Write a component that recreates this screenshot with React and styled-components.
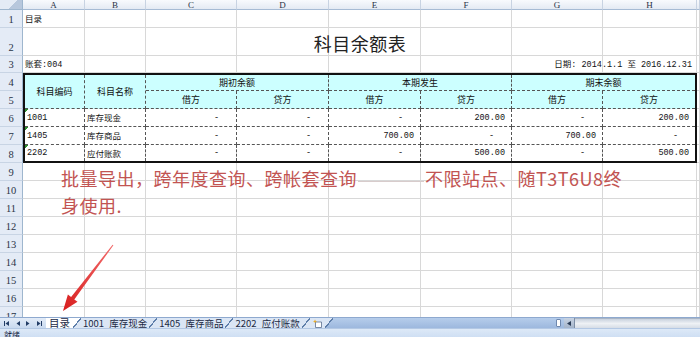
import { Fragment } from "react";
import styled, { createGlobalStyle } from "styled-components";

const GlobalStyle = createGlobalStyle`
  *, *::before, *::after { box-sizing: border-box; }
  html, body { margin: 0; padding: 0; background: #fff; }
  body { font-family: "Noto Sans CJK SC", sans-serif; color: #111; }
`;

const COLUMNS = ["A", "B", "C", "D", "E", "F", "G", "H"];
const ROWS = Array.from({ length: 17 }, (_, i) => i + 1);
const CELL_FONT = `"Liberation Mono", "Noto Sans CJK SC", monospace`;
const TAB_BG = "#dbe6f5";

const accounts = [
  { code: "1001", name: "库存现金", values: ["-", "-", "-", "200.00", "-", "200.00"] },
  { code: "1405", name: "库存商品", values: ["-", "-", "700.00", "-", "700.00", "-"] },
  { code: "2202", name: "应付账款", values: ["-", "-", "-", "500.00", "-", "500.00"] },
];

const groups = ["期初余额", "本期发生", "期末余额"];
const tabs = [
  { code: "", name: "目录", active: true },
  { code: "1001", name: "库存现金" },
  { code: "1405", name: "库存商品" },
  { code: "2202", name: "应付账款" },
];

const Page = styled.div`
  position: relative;
  width: 700px;
  height: 337px;
  display: flex;
  flex-direction: column;
  overflow: hidden;
`;

const Sheet = styled.div`
  display: grid;
  grid-template-columns: 23px 62px 61px 91px 92px 92px 91px 91px 94px 1fr;
  grid-template-rows: 10px 18px 28px 17px repeat(14, 18px);
  height: 317px;
  overflow: hidden;
`;

const Corner = styled.div`
  grid-row: 1;
  grid-column: 1;
  background: linear-gradient(135deg, transparent 58%, #b7c7dc 58%), #e4ebf5;
  border-right: 1px solid #9eb6ce;
  border-bottom: 1px solid #9eb6ce;
`;

const ColHead = styled.div`
  grid-row: 1;
  grid-column: ${(p) => p.$col};
  display: flex;
  align-items: center;
  justify-content: center;
  background: linear-gradient(#f8fafd, #e4eaf3);
  border-right: 1px solid #c8d3e2;
  border-bottom: 1px solid #a6bbd4;
  font-family: "Liberation Serif", serif;
  font-size: 9px;
  line-height: 10px;
  color: #2a3346;
`;

const RowHead = styled.div`
  grid-row: ${(p) => p.$row};
  grid-column: 1;
  display: flex;
  align-items: flex-end;
  justify-content: center;
  padding-bottom: 1px;
  background: #e4ebf6;
  border-right: 1px solid #9eb6ce;
  border-bottom: 1px solid #c8d4e4;
  font-family: "Liberation Serif", serif;
  font-size: 10.5px;
  line-height: 12px;
  color: #2a3346;
`;

const GridCell = styled.div`
  grid-row: ${(p) => p.$row};
  grid-column: ${(p) => p.$col};
  border-right: 1px solid #d8d8d8;
  border-bottom: 1px solid #d8d8d8;
`;

const CellText = styled.div`
  grid-area: ${(p) => p.$area};
  display: flex;
  align-items: flex-end;
  justify-content: ${(p) => p.$justify || "flex-start"};
  padding: 0 ${(p) => p.$padRight || 0}px 3px 2px;
  font-family: ${CELL_FONT};
  font-size: 8.5px;
  line-height: 10px;
  white-space: nowrap;
  color: #111;
`;

const Title = styled.div`
  grid-area: 3 / 2 / 4 / 10;
  display: flex;
  align-items: center;
  justify-content: center;
  padding-top: 2px;
  font-size: 18px;
  letter-spacing: 0.5px;
  color: #222;
`;

const Table = styled.div`
  grid-area: 5 / 2 / 10 / 10;
  display: grid;
  grid-template-columns: 60px 61px 91px 92px 92px 91px 91px 92px;
  grid-template-rows: 16px 18px 18px 18px 16px;
  border: 2px solid #111;
  background: #fff;
  z-index: 1;
`;

const TCell = styled.div`
  grid-column: span ${(p) => p.$span || 1};
  grid-row: span ${(p) => p.$rows || 1};
  display: flex;
  align-items: center;
  justify-content: ${(p) => p.$justify || "center"};
  padding: 0 ${(p) => p.$padRight || 0}px 0 ${(p) => p.$padLeft || 0}px;
  background: ${(p) =>
    p.$head
      ? "#ccffff"
      : p.$flag
      ? "linear-gradient(135deg, #2f8f2f 0 2.6px, #fff 2.6px)"
      : "#fff"};
  border-right: ${(p) => (p.$lastCol ? "none" : "1px dashed #555")};
  border-bottom: ${(p) => (p.$lastRow ? "none" : "1px dashed #555")};
  font-family: ${CELL_FONT};
  font-size: ${(p) => (p.$head ? 9 : 8.5)}px;
  white-space: nowrap;
  color: #111;
`;

const Note = styled.div`
  grid-area: 10 / 2 / 14 / 10;
  padding: 2px 0 0 38px;
  font-family: "Noto Sans CJK SC", sans-serif;
  font-size: 18px;
  line-height: 27px;
  letter-spacing: 0.5px;
  color: #c25452;
  white-space: nowrap;
  z-index: 1;
`;

const Dash = styled.span`
  display: inline-block;
  width: 66px;
  height: 1px;
  margin: 0 1px;
  vertical-align: middle;
  background: #d8cccc;
`;

const Arrow = styled.svg`
  position: absolute;
  left: 55px;
  top: 240px;
  width: 65px;
  height: 75px;
  pointer-events: none;
  z-index: 2;
`;

const TabBar = styled.div`
  display: flex;
  height: 11px;
  background: linear-gradient(#b6cdeb, #9db8de);
  border-top: 1px solid #8ea9cf;
`;

const Nav = styled.div`
  width: 46px;
  display: flex;
  align-items: center;
  justify-content: space-around;
  padding: 0 2px;
  background: linear-gradient(#e3ecf8, #c8d9ef);
`;

const Tab = styled.div`
  display: flex;
  align-items: center;
  height: 100%;
  padding: 0 ${(p) => (p.$active ? 3 : 2)}px;
  background: ${(p) => (p.$active ? "#fff" : TAB_BG)};
  font-size: ${(p) => (p.$active ? 10.5 : 9.5)}px;
  line-height: 10px;
  word-spacing: 3px;
  color: #1b2a44;
  white-space: nowrap;
`;

const Slash = styled.div`
  width: 8px;
  height: 100%;
  background: linear-gradient(
    to bottom right,
    ${(p) => p.$left} calc(50% - 0.7px),
    #5f7faa calc(50% - 0.7px),
    #5f7faa calc(50% + 0.7px),
    ${(p) => p.$right} calc(50% + 0.7px)
  );
`;

const Filler = styled.div`
  flex: 1;
`;

const Splitter = styled.div`
  width: 5px;
  margin: 1px 3px 1px 0;
  background: #fff;
  border: 1px solid #6f88ae;
  border-radius: 1px;
`;

const ScrollButton = styled.div`
  width: 11px;
  display: flex;
  align-items: center;
  justify-content: center;
  background: linear-gradient(#c7d3e3, #a4b4ca);
  border-right: 1px solid #7e8fa6;
`;

const ScrollTrack = styled.div`
  width: 125px;
  background: linear-gradient(#8797ad 0, #c9d2de 1px, #eef1f5 55%, #d6dde6 100%);
`;

const StatusBar = styled.div`
  height: 9px;
  padding: 1px 0 0 4px;
  overflow: hidden;
  background: linear-gradient(#dde9f7, #cfdff3);
  border-top: 1px solid #b3c8e4;
  font-size: 8px;
  line-height: 10px;
  color: #1b2a44;
`;

const NavIcon = ({ dir, edge }) => (
  <svg width="6" height="5" viewBox="0 0 6 5">
    {dir === "left" ? (
      <>
        {edge && <rect x="0" y="0" width="1" height="5" fill="#223c66" />}
        <polygon points="5,0 5,5 1.5,2.5" fill="#223c66" />
      </>
    ) : (
      <>
        <polygon points="1,0 1,5 4.5,2.5" fill="#223c66" />
        {edge && <rect x="5" y="0" width="1" height="5" fill="#223c66" />}
      </>
    )}
  </svg>
);

const InsertIcon = () => (
  <svg width="11" height="9" viewBox="0 0 11 9">
    <path d="M3.5 3h6v5.5h-6z" fill="#fff" stroke="#5a6f8f" strokeWidth="0.8" />
    <path d="M3 0.5l.7 1.5 1.6.3-1.6.4L3 4.3l-.7-1.6L.7 2.3l1.6-.3z" fill="#eda918" />
  </svg>
);

export default function App() {
  return (
    <>
      <GlobalStyle />
      <Page>
        <Sheet>
          <Corner />
          {COLUMNS.map((c, i) => (
            <ColHead key={c} $col={i + 2}>
              {c}
            </ColHead>
          ))}
          <ColHead $col={10} />
          {ROWS.map((r) => (
            <RowHead key={`h${r}`} $row={r + 1}>
              {r}
            </RowHead>
          ))}
          {ROWS.map((r) =>
            COLUMNS.concat("I").map((c, i) => (
              <GridCell key={`${c}${r}`} $row={r + 1} $col={i + 2} />
            ))
          )}

          <CellText $area="2 / 2 / 3 / 4">目录</CellText>
          <Title>科目余额表</Title>
          <CellText $area="4 / 2 / 5 / 4">账套:004</CellText>
          <CellText $area="4 / 7 / 5 / 10" $justify="flex-end" $padRight={5}>
            日期: 2014.1.1 至 2016.12.31
          </CellText>

          <Table>
            <TCell $head $rows={2}>科目编码</TCell>
            <TCell $head $rows={2}>科目名称</TCell>
            {groups.map((g, i) => (
              <TCell key={g} $head $span={2} $lastCol={i === 2}>
                {g}
              </TCell>
            ))}
            {[0, 1, 2].flatMap((i) => [
              <TCell key={`d${i}`} $head>借方</TCell>,
              <TCell key={`c${i}`} $head $lastCol={i === 2}>
                贷方
              </TCell>,
            ])}
            {accounts.flatMap((a, ri) => {
              const lastRow = ri === accounts.length - 1;
              return [
                <TCell key={`${a.code}c`} $flag $justify="flex-start" $padLeft={2} $lastRow={lastRow}>
                  {a.code}
                </TCell>,
                <TCell key={`${a.code}n`} $justify="flex-start" $padLeft={2} $lastRow={lastRow}>
                  {a.name}
                </TCell>,
                ...a.values.map((v, vi) => (
                  <TCell
                    key={`${a.code}${vi}`}
                    $justify="flex-end"
                    $padRight={v === "-" ? 17 : 6}
                    $lastCol={vi === 5}
                    $lastRow={lastRow}
                  >
                    {v}
                  </TCell>
                )),
              ];
            })}
          </Table>

          <Note>
            批量导出，跨年度查询、跨帐套查询<Dash />不限站点、随T3T6U8终
            <br />
            身使用.
          </Note>
        </Sheet>

        <TabBar>
          <Nav>
            <NavIcon dir="left" edge />
            <NavIcon dir="left" />
            <NavIcon dir="right" />
            <NavIcon dir="right" edge />
          </Nav>
          {tabs.map((t) => (
            <Fragment key={t.name}>
              <Tab $active={t.active}>
                {t.code ? `${t.code} ${t.name}` : t.name}
              </Tab>
              <Slash $left={t.active ? "#fff" : TAB_BG} $right={TAB_BG} />
            </Fragment>
          ))}
          <Tab>
            <InsertIcon />
          </Tab>
          <Slash $left={TAB_BG} $right="transparent" />
          <Filler />
          <Splitter />
          <ScrollButton>
            <svg width="4" height="5" viewBox="0 0 4 5">
              <polygon points="4,0 4,5 0,2.5" fill="#2b3d57" />
            </svg>
          </ScrollButton>
          <ScrollTrack />
        </TabBar>
        <StatusBar>就绪</StatusBar>

        <Arrow viewBox="55 240 65 75">
          <defs>
            <linearGradient id="arrowRed" x1="1" y1="0" x2="0" y2="1">
              <stop offset="0" stopColor="#f26a6a" />
              <stop offset="1" stopColor="#d81e1e" />
            </linearGradient>
          </defs>
          <polygon
            points="113.4,245.3 74.3,299.4 77.5,301.8 63,311 67.9,294.6 71.1,297 112.6,244.7"
            fill="url(#arrowRed)"
          />
        </Arrow>
      </Page>
    </>
  );
}
